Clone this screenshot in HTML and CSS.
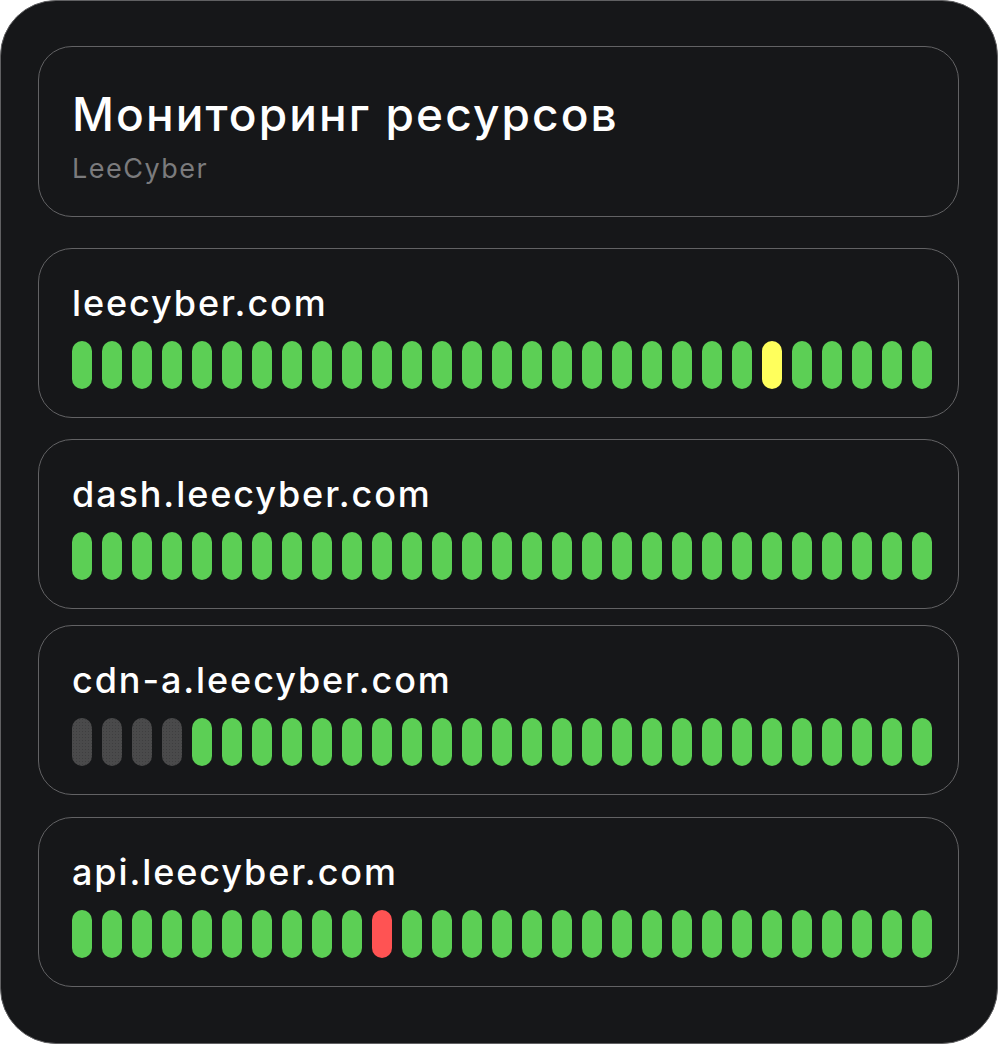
FILE: index.html
```html
<!DOCTYPE html>
<html lang="ru">
<head>
<meta charset="utf-8">
<title>Мониторинг ресурсов</title>
<link rel="stylesheet" href="styles.css">
</head>
<body>
<div class="panel">
  <div class="card header">
    <h1 class="title">Мониторинг ресурсов</h1>
    <div class="subtitle">LeeCyber</div>
  </div>
  <div class="card site site-1">
    <div class="name">leecyber.com</div>
    <div class="bars">
      <i class="ok"></i><i class="ok"></i><i class="ok"></i><i class="ok"></i><i class="ok"></i><i class="ok"></i><i class="ok"></i><i class="ok"></i><i class="ok"></i><i class="ok"></i><i class="ok"></i><i class="ok"></i><i class="ok"></i><i class="ok"></i><i class="ok"></i><i class="ok"></i><i class="ok"></i><i class="ok"></i><i class="ok"></i><i class="ok"></i><i class="ok"></i><i class="ok"></i><i class="ok"></i><i class="warn"></i><i class="ok"></i><i class="ok"></i><i class="ok"></i><i class="ok"></i><i class="ok"></i>
    </div>
  </div>
  <div class="card site site-2">
    <div class="name">dash.leecyber.com</div>
    <div class="bars">
      <i class="ok"></i><i class="ok"></i><i class="ok"></i><i class="ok"></i><i class="ok"></i><i class="ok"></i><i class="ok"></i><i class="ok"></i><i class="ok"></i><i class="ok"></i><i class="ok"></i><i class="ok"></i><i class="ok"></i><i class="ok"></i><i class="ok"></i><i class="ok"></i><i class="ok"></i><i class="ok"></i><i class="ok"></i><i class="ok"></i><i class="ok"></i><i class="ok"></i><i class="ok"></i><i class="ok"></i><i class="ok"></i><i class="ok"></i><i class="ok"></i><i class="ok"></i><i class="ok"></i>
    </div>
  </div>
  <div class="card site site-3">
    <div class="name">cdn-a.leecyber.com</div>
    <div class="bars">
      <i class="none"></i><i class="none"></i><i class="none"></i><i class="none"></i><i class="ok"></i><i class="ok"></i><i class="ok"></i><i class="ok"></i><i class="ok"></i><i class="ok"></i><i class="ok"></i><i class="ok"></i><i class="ok"></i><i class="ok"></i><i class="ok"></i><i class="ok"></i><i class="ok"></i><i class="ok"></i><i class="ok"></i><i class="ok"></i><i class="ok"></i><i class="ok"></i><i class="ok"></i><i class="ok"></i><i class="ok"></i><i class="ok"></i><i class="ok"></i><i class="ok"></i><i class="ok"></i>
    </div>
  </div>
  <div class="card site site-4">
    <div class="name">api.leecyber.com</div>
    <div class="bars">
      <i class="ok"></i><i class="ok"></i><i class="ok"></i><i class="ok"></i><i class="ok"></i><i class="ok"></i><i class="ok"></i><i class="ok"></i><i class="ok"></i><i class="ok"></i><i class="down"></i><i class="ok"></i><i class="ok"></i><i class="ok"></i><i class="ok"></i><i class="ok"></i><i class="ok"></i><i class="ok"></i><i class="ok"></i><i class="ok"></i><i class="ok"></i><i class="ok"></i><i class="ok"></i><i class="ok"></i><i class="ok"></i><i class="ok"></i><i class="ok"></i><i class="ok"></i><i class="ok"></i>
    </div>
  </div>
</div>
</body>
</html>
```
FILE: styles.css
```css
html, body {
  margin: 0;
  padding: 0;
  background: #ffffff;
}

body {
  font-family: Inter, "Noto Sans", sans-serif;
  color: #ffffff;
}

.panel {
  box-sizing: border-box;
  width: 998px;
  height: 1044px;
  background: #161719;
  border: 1.5px solid #606062;
  border-radius: 56px;
  padding: 44.5px 38px 0 36.5px;
  display: flex;
  flex-direction: column;
}

.card {
  box-sizing: border-box;
  border: 1.5px solid #626264;
  border-radius: 34px;
  padding: 0 0 0 33.5px;
}

.header {
  height: 171px;
  padding-top: 44px;
}

.title {
  margin: 0;
  font-size: 46px;
  font-weight: 500;
  line-height: 46px;
  letter-spacing: 2.1px;
}

.subtitle {
  margin-top: 18px;
  font-size: 27px;
  line-height: 27px;
  letter-spacing: 1.5px;
  color: #7b7b7d;
}

.site {
  height: 170px;
  padding-top: 34px;
}

.site-1 { margin-top: 31px; }
.site-2 { margin-top: 21px; }
.site-3 { margin-top: 16px; }
.site-4 { margin-top: 22px; }

.name {
  font-size: 36px;
  font-weight: 500;
  line-height: 40px;
  height: 40px;
  letter-spacing: 1.9px;
}

.bars {
  display: flex;
  gap: 10px;
  margin-top: 18px;
}

.bars i {
  display: block;
  width: 20px;
  height: 48px;
  border-radius: 10px;
}

.bars .ok { background: #5ccf55; }
.bars .warn { background: #ffff5c; }
.bars .down { background: #ff5353; }
.bars .none {
  background-color: #4a4a4b;
  background-image: radial-gradient(circle, #3e3e3f 0.5px, transparent 0.9px);
  background-size: 3px 3px;
}
```
